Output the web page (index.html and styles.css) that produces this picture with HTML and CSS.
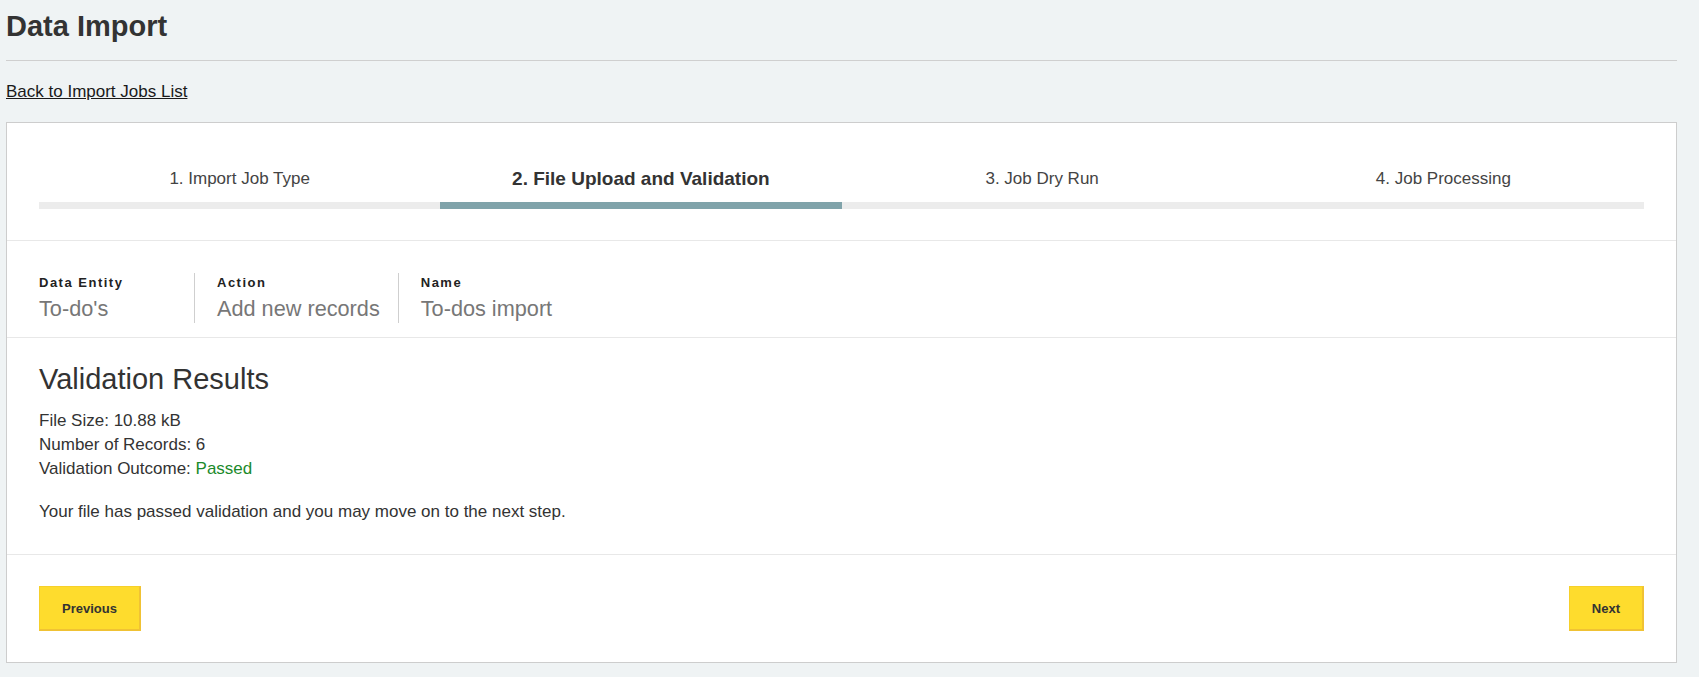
FILE: index.html
```html
<!DOCTYPE html>
<html lang="en">
<head>
<meta charset="utf-8">
<title>Data Import</title>
<link rel="stylesheet" href="styles.css">
</head>
<body>
<div class="page">
  <h1 class="page-title">Data Import</h1>
  <hr class="title-rule">
  <a class="back-link" href="#">Back to Import Jobs List</a>

  <section class="card">
    <div class="steps">
      <div class="step">
        <div class="step-label">1. Import Job Type</div>
        <div class="step-bar"></div>
      </div>
      <div class="step step-active">
        <div class="step-label">2. File Upload and Validation</div>
        <div class="step-bar"></div>
      </div>
      <div class="step">
        <div class="step-label">3. Job Dry Run</div>
        <div class="step-bar"></div>
      </div>
      <div class="step">
        <div class="step-label">4. Job Processing</div>
        <div class="step-bar"></div>
      </div>
    </div>

    <div class="summary">
      <div class="summary-item">
        <div class="summary-label">Data Entity</div>
        <div class="summary-value">To-do's</div>
      </div>
      <div class="summary-item">
        <div class="summary-label">Action</div>
        <div class="summary-value">Add new records</div>
      </div>
      <div class="summary-item">
        <div class="summary-label">Name</div>
        <div class="summary-value">To-dos import</div>
      </div>
    </div>

    <div class="results">
      <h2 class="results-title">Validation Results</h2>
      <div class="results-stats">
        <div>File Size: 10.88 kB</div>
        <div>Number of Records: 6</div>
        <div>Validation Outcome: <span class="passed">Passed</span></div>
      </div>
      <p class="results-note">Your file has passed validation and you may move on to the next step.</p>
    </div>

    <div class="actions">
      <button class="btn" type="button">Previous</button>
      <button class="btn" type="button">Next</button>
    </div>
  </section>
</div>
</body>
</html>
```

FILE: styles.css
```css
* { box-sizing: border-box; }

body {
  margin: 0;
  background: #eff3f4;
  font-family: "Liberation Sans", Arial, sans-serif;
  color: #333;
}

.page {
  padding: 0 22px 14px 6px;
}

.page-title {
  margin: 0;
  padding-top: 8px;
  font-size: 29px;
  line-height: 36px;
  font-weight: 700;
  color: #333;
}

.title-rule {
  margin: 16px 0 0;
  border: 0;
  border-top: 1px solid #cfcfcf;
}

.back-link {
  display: inline-block;
  margin-top: 19px;
  font-size: 17px;
  line-height: 24px;
  color: #1a1a1a;
  text-decoration: underline;
}

.card {
  margin-top: 18px;
  background: #fff;
  border: 1px solid #cdcdcd;
}

.steps {
  display: flex;
  padding: 32px 32px 31px;
  border-bottom: 1px solid #e8e8e8;
}

.step {
  flex: 1 1 0;
  display: flex;
  flex-direction: column;
}

.step-label {
  height: 47px;
  display: flex;
  align-items: center;
  justify-content: center;
  font-size: 17px;
  color: #444;
}

.step-active .step-label {
  font-size: 19px;
  font-weight: 700;
  color: #333;
}

.step-bar {
  height: 7px;
  background: #ececec;
}

.step-active .step-bar {
  background: #80a3aa;
}

.summary {
  display: flex;
  padding: 32px 32px 14px;
  border-bottom: 1px solid #e8e8e8;
}

.summary-item {
  min-width: 137px;
  padding: 0 18px 0 22px;
  border-left: 1px solid #cfcfcf;
  box-sizing: content-box;
}

.summary-item:first-child {
  padding-left: 0;
  border-left: 0;
}

.summary-label {
  font-size: 13px;
  line-height: 20px;
  font-weight: 700;
  letter-spacing: 1.5px;
  color: #222;
}

.summary-value {
  margin-top: 2px;
  font-size: 21.7px;
  line-height: 28px;
  color: #777;
}

.results {
  padding: 24px 32px 30px;
  border-bottom: 1px solid #e8e8e8;
}

.results-title {
  margin: 0;
  font-size: 29px;
  line-height: 34px;
  font-weight: 400;
  color: #333;
}

.results-stats {
  margin-top: 13px;
  font-size: 17px;
  line-height: 24px;
}

.passed {
  color: #1b8a2b;
}

.results-note {
  margin: 19px 0 0;
  font-size: 17px;
  line-height: 24px;
}

.actions {
  display: flex;
  justify-content: space-between;
  padding: 31px 32px;
}

.btn {
  font-family: inherit;
  font-size: 13px;
  line-height: 16px;
  font-weight: 700;
  color: #333;
  background: #fedc2d;
  border: 1px solid #f6d02a;
  border-right: 2px solid #f0c234;
  border-bottom: 2px solid #f0c234;
  padding: 14px 22px 12px;
  cursor: pointer;
}
```
